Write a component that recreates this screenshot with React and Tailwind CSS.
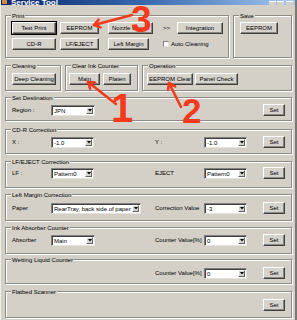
import React from "react";

const RED = "#f43a1c";

function Btn({ w, children, def, className = "" }) {
  return (
    <div
      className={`flex items-center justify-center h-[12px] ${w} shrink-0 bg-[#d6d3cd] border border-t-white border-l-white border-b-[#404040] border-r-[#404040] shadow-[inset_-1px_-1px_0_#8a8780] text-[6px] leading-none text-black whitespace-nowrap ${def ? "outline outline-1 outline-black" : ""} ${className}`}
    >
      {children}
    </div>
  );
}

function Sel({ w, value }) {
  return (
    <div
      className={`flex items-stretch h-[11px] ${w} bg-white border border-t-[#808080] border-l-[#808080] border-b-[#e4e2dc] border-r-[#e4e2dc] shadow-[inset_1px_1px_0_#404040]`}
    >
      <span className="flex-1 min-w-0 overflow-hidden whitespace-nowrap pl-[2px] pt-[1px] text-[6px] leading-[8px] text-black">
        {value}
      </span>
      <div className="w-[7px] my-[1px] mr-[1px] flex items-center justify-center bg-[#d6d3cd] border-t border-l border-t-white border-l-white border-r border-b border-r-[#606060] border-b-[#606060]">
        <svg width="4" height="3" viewBox="0 0 4 3">
          <path d="M0 0H4L2 2.5Z" fill="#000" />
        </svg>
      </div>
    </div>
  );
}

function Group({ label, className = "", children }) {
  return (
    <div
      className={`flex flex-col border border-[#8c8a84] shadow-[inset_1px_1px_0_#fff,1px_1px_0_#fff] ${className}`}
    >
      <span className="self-start -mt-[4px] ml-[5px] px-[1px] h-[8px] leading-[8px] text-[6px] text-black bg-[#d4d0c8] whitespace-nowrap">
        {label}
      </span>
      {children}
    </div>
  );
}

function Row({ l1, s1, w1 = "w-[44px]", l2, s2, mt = "mt-[2px]" }) {
  return (
    <div
      className={`grid grid-cols-[39px_104px_49px_59px_22px] items-center pl-[6px] ${mt}`}
    >
      <span className="text-[6px] leading-none whitespace-nowrap">{l1}</span>
      <div>{s1 !== undefined && <Sel w={w1} value={s1} />}</div>
      <span className="text-[6px] leading-none whitespace-nowrap">{l2}</span>
      <div>{s2 !== undefined && <Sel w="w-[43px]" value={s2} />}</div>
      <Btn w="w-[22px]">Set</Btn>
    </div>
  );
}

function Arrow({ x1, y1, x2, y2 }) {
  const a = Math.atan2(y1 - y2, x1 - x2);
  const L = 7;
  const s = 0.6;
  const p1 = [x2 + L * Math.cos(a + s), y2 + L * Math.sin(a + s)];
  const p2 = [x2 + L * Math.cos(a - s), y2 + L * Math.sin(a - s)];
  return (
    <g stroke={RED} strokeWidth="2.6" strokeLinecap="round" fill="none">
      <line x1={x1} y1={y1} x2={x2} y2={y2} />
      <polyline points={`${p1[0]},${p1[1]} ${x2},${y2} ${p2[0]},${p2[1]}`} strokeLinejoin="round" />
    </g>
  );
}

export default function App() {
  return (
    <div className="relative w-[297px] h-[320px] overflow-hidden bg-[#d4d0c8] font-['Liberation_Sans',Arial,sans-serif] text-black border-l border-l-[#f0efea] border-r-2 border-r-[#7a7872]">
      {/* title bar */}
      <div className="h-[5px] overflow-hidden flex items-end bg-gradient-to-r from-[#0a246a] via-[#3a6ab0] to-[#a6caf0]">
        <div className="w-[5px] h-[4px] ml-[1px] bg-[#c84] mb-[1px]" />
        <span className="ml-[4px] text-[8px] leading-[5px] font-bold text-white">Service Tool</span>
        <div className="ml-auto mr-[2px] flex gap-[1px] items-end">
          <div className="w-[7px] h-[4px] bg-[#d4d0c8] border-t border-t-white" />
          <div className="w-[7px] h-[4px] bg-[#d4d0c8] border-t border-t-white" />
          <div className="ml-[1px] w-[7px] h-[4px] bg-[#d4d0c8] border-t border-t-white" />
        </div>
      </div>

      <div className="flex flex-col pl-[4px] pr-[3px]">
        {/* row 1 */}
        <div className="flex gap-[4px] mt-[10px] h-[43px]">
          <Group label="Print" className="w-[224px]">
            <div className="flex items-center mt-[2px] pl-[6px]">
              <Btn w="w-[44px]" def>Test Print</Btn>
              <Btn w="w-[39px]" className="ml-[4px]">EEPROM</Btn>
              <Btn w="w-[45px]" className="ml-[9px]">Nozzle Check</Btn>
              <span className="ml-[10px] w-[8px] text-[6px] leading-none">&gt;&gt;</span>
              <Btn w="w-[46px]" className="ml-[6px]">Integration</Btn>
            </div>
            <div className="flex items-center mt-[4px] pl-[6px]">
              <Btn w="w-[44px]">CD-R</Btn>
              <Btn w="w-[39px]" className="ml-[4px]">LF/EJECT</Btn>
              <Btn w="w-[41px]" className="ml-[9px]">Left Margin</Btn>
              <div className="ml-[14px] w-[6px] h-[6px] bg-white border border-t-[#808080] border-l-[#808080] border-b-[#e4e2dc] border-r-[#e4e2dc]" />
              <span className="ml-[2px] text-[6px] leading-none">Auto Cleaning</span>
            </div>
          </Group>
          <Group label="Save" className="flex-1">
            <div className="flex mt-[2px] pl-[6px]">
              <Btn w="w-[38px]">EEPROM</Btn>
            </div>
          </Group>
        </div>

        {/* row 2 */}
        <div className="flex gap-[4px] mt-[7px] h-[26px]">
          <Group label="Cleaning" className="w-[56px]">
            <div className="flex mt-[3px] pl-[6px]">
              <Btn w="w-[44px]">Deep Cleaning</Btn>
            </div>
          </Group>
          <Group label="Clear Ink Counter" className="w-[73px]">
            <div className="flex mt-[3px] pl-[3px]">
              <Btn w="w-[31px]">Main</Btn>
              <Btn w="w-[28px]" className="ml-[3px]">Platen</Btn>
            </div>
          </Group>
          <Group label="Operation" className="flex-1">
            <div className="flex mt-[3px] pl-[4px]">
              <Btn w="w-[46px]">EEPROM Clear</Btn>
              <Btn w="w-[43px]" className="ml-[2px]">Panel Check</Btn>
            </div>
          </Group>
        </div>

        <Group label="Set Destination" className="mt-[6px] h-[24px]">
          <Row l1="Region :" s1="JPN" mt="mt-[2px]" />
        </Group>
        <Group label="CD-R Correction" className="mt-[8px] h-[25px]">
          <Row l1="X :" s1="-1.0" w1="w-[43px]" l2="Y :" s2="-1.0" />
        </Group>
        <Group label="LF/EJECT Correction" className="mt-[7px] h-[27px]">
          <Row l1="LF :" s1="Pattern0" w1="w-[43px]" l2="EJECT" s2="Pattern0" mt="mt-[1px]" />
        </Group>
        <Group label="Left Margin Correction" className="mt-[6px] h-[27px]">
          <Row l1="Paper" s1="RearTray, back side of paper" w1="w-[90px]" l2="Correction Value" s2="-3" mt="mt-[3px]" />
        </Group>
        <Group label="Ink Absorber Counter" className="mt-[6px] h-[27px]">
          <Row l1="Absorber" s1="Main" l2="Counter Value[%]" s2="0" mt="mt-[2px]" />
        </Group>
        <Group label="Wetting Liquid Counter" className="mt-[5px] h-[25px]">
          <Row l2="Counter Value[%]" s2="0" mt="mt-[3px]" />
        </Group>
        <Group label="Flatbed Scanner" className="mt-[7px] h-[27px]">
          <Row mt="mt-[3px]" />
        </Group>
      </div>

      {/* annotations */}
      <svg className="absolute inset-0 pointer-events-none" width="297" height="320" viewBox="0 0 297 320">
        <Arrow x1={131} y1={15} x2={93} y2={25} />
        <Arrow x1={115} y1={104} x2={87} y2={82} />
        <Arrow x1={180} y1={107} x2={168} y2={83} />
        <g fill={RED} fontFamily="Liberation Sans, Arial, sans-serif" fontWeight="bold">
          <text x="130" y="32" fontSize="37">3</text>
          <text x="110" y="122" fontSize="40">1</text>
          <text x="181" y="123" fontSize="35">2</text>
        </g>
      </svg>
    </div>
  );
}
